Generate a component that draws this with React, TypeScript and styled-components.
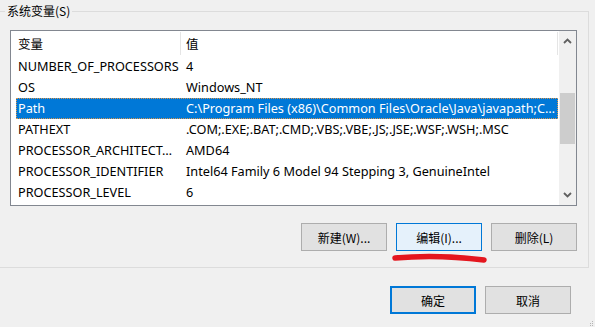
import React from "react";
import styled, { createGlobalStyle } from "styled-components";

const GlobalStyle = createGlobalStyle`
  html, body { margin: 0; padding: 0; background: #f0f0f0; }
  body {
    font-family: "Segoe UI", "Noto Sans", "Noto Sans CJK SC", sans-serif;
    font-size: 12.7px;
    color: #000;
    overflow: hidden;
  }
`;

const Page = styled.div`
  position: relative;
  width: 595px;
  height: 327px;
  display: flex;
  flex-direction: column;
  box-sizing: border-box;
  padding-top: 11px;
`;

const Group = styled.div`
  position: relative;
  width: 589px;
  box-sizing: border-box;
  border: 1px solid #dcdcdc;
  border-left: none;
  padding: 18px 11px 16px 10px;
  display: flex;
  flex-direction: column;
  gap: 17px;
`;

const Legend = styled.span`
  position: absolute;
  left: 5px;
  top: -9px;
  padding: 0 2px;
  background: #f0f0f0;
  line-height: 16px;
  font-size: 12px;
  font-family: "Noto Sans CJK SC", sans-serif;
`;

const ListBox = styled.div`
  height: 176px;
  box-sizing: border-box;
  border: 1px solid #828790;
  background: #fff;
  display: flex;
`;

const ListMain = styled.div`
  flex: 1;
  padding: 0 1px 0 5px;
  display: flex;
  flex-direction: column;
  overflow: hidden;
`;

const Row = styled.div<{ $header?: boolean; $selected?: boolean }>`
  display: grid;
  grid-template-columns: 165px 1fr;
  height: ${(p) => (p.$header ? 25 : 21)}px;
  line-height: ${(p) => (p.$header ? 25 : 21)}px;
  background: ${(p) => (p.$selected ? "#0078d7" : "transparent")};
  color: ${(p) => (p.$selected ? "#fff" : "#000")};
  outline: ${(p) => (p.$selected ? "1px dotted #d9964f" : "none")};
  outline-offset: -1px;
  white-space: nowrap;
`;

const Cell = styled.div<{ $first?: boolean; $header?: boolean }>`
  overflow: hidden;
  text-overflow: ellipsis;
  padding-left: ${(p) => (p.$first ? 2 : 5)}px;
  box-sizing: border-box;
  font-family: ${(p) => (p.$header ? '"Noto Sans CJK SC", sans-serif' : "inherit")};
  font-size: ${(p) => (p.$header ? "12.5px" : "inherit")};
  border-right: ${(p) => (p.$header ? "1px solid #e5e5e5" : "none")};
  margin: ${(p) => (p.$header ? "1px 0 1px" : "0")};
  line-height: ${(p) => (p.$header ? "23px" : "inherit")};
`;

const ScrollBar = styled.div`
  width: 17px;
  background: #f0f0f0;
  display: flex;
  flex-direction: column;
`;

const ArrowBtn = styled.div`
  height: 20px;
  display: flex;
  align-items: center;
  justify-content: center;
`;

const Track = styled.div`
  flex: 1;
  display: flex;
  flex-direction: column;
`;

const Thumb = styled.div`
  width: 15px;
  margin-left: 1px;
  background: #cdcdcd;
`;

const ButtonRow = styled.div`
  display: flex;
  justify-content: flex-end;
  gap: 9px;
`;

const BtnWrap = styled.div`
  position: relative;
`;

const Button = styled.button<{ $variant?: "normal" | "hover" | "default" }>`
  width: 86px;
  height: 28px;
  margin: 0;
  padding: 0;
  box-sizing: border-box;
  font-family: "Noto Sans CJK SC", sans-serif;
  font-size: 12px;
  color: #000;
  background: ${(p) => (p.$variant === "hover" ? "#e5f1fb" : "#e1e1e1")};
  border: ${(p) =>
    p.$variant === "hover"
      ? "1px solid #0078d7"
      : p.$variant === "default"
      ? "2px solid #0078d7"
      : "1px solid #adadad"};
`;

const RedMark = styled.svg`
  position: absolute;
  left: -4px;
  top: 30px;
  overflow: visible;
`;

const DialogButtons = styled.div`
  display: flex;
  justify-content: flex-end;
  gap: 9px;
  margin-top: 18px;
  padding-right: 24px;
`;

const Grip = styled.svg`
  position: absolute;
  right: 1px;
  bottom: 1px;
`;

const rows: [string, string][] = [
  ["NUMBER_OF_PROCESSORS", "4"],
  ["OS", "Windows_NT"],
  ["Path", "C:\\Program Files (x86)\\Common Files\\Oracle\\Java\\javapath;C:\u2026"],
  ["PATHEXT", ".COM;.EXE;.BAT;.CMD;.VBS;.VBE;.JS;.JSE;.WSF;.WSH;.MSC"],
  ["PROCESSOR_ARCHITECT\u2026", "AMD64"],
  ["PROCESSOR_IDENTIFIER", "Intel64 Family 6 Model 94 Stepping 3, GenuineIntel"],
  ["PROCESSOR_LEVEL", "6"],
];

const thumbOffset = 42;
const thumbSize = 51;

export default function App() {
  return (
    <>
      <GlobalStyle />
      <Page>
        <Group>
          <Legend>系统变量(S)</Legend>
          <ListBox>
            <ListMain>
              <Row $header>
                <Cell $first $header>变量</Cell>
                <Cell $header>值</Cell>
              </Row>
              {rows.map(([k, v], i) => (
                <Row key={k} $selected={i === 2}>
                  <Cell $first>{k}</Cell>
                  <Cell>{v}</Cell>
                </Row>
              ))}
            </ListMain>
            <ScrollBar>
              <ArrowBtn>
                <svg width="9" height="6" viewBox="0 0 9 6">
                  <polyline points="1,5 4.5,1.5 8,5" fill="none" stroke="#606060" strokeWidth="1.8" />
                </svg>
              </ArrowBtn>
              <Track>
                <Thumb style={{ marginTop: thumbOffset, height: thumbSize }} />
              </Track>
              <ArrowBtn>
                <svg width="9" height="6" viewBox="0 0 9 6">
                  <polyline points="1,1 4.5,4.5 8,1" fill="none" stroke="#606060" strokeWidth="1.8" />
                </svg>
              </ArrowBtn>
            </ScrollBar>
          </ListBox>
          <ButtonRow>
            <Button>新建(W)...</Button>
            <BtnWrap>
              <Button $variant="hover">编辑(I)...</Button>
              <RedMark width="96" height="10" viewBox="0 0 96 10">
                <path d="M3,5 C30,2.5 60,3 92,7" fill="none" stroke="#e4161e" strokeWidth="5.5" strokeLinecap="round" />
              </RedMark>
            </BtnWrap>
            <Button>删除(L)</Button>
          </ButtonRow>
        </Group>
        <DialogButtons>
          <Button $variant="default">确定</Button>
          <Button>取消</Button>
        </DialogButtons>
        <Grip width="5" height="5" viewBox="0 0 5 5">
          <rect x="3" y="0" width="1" height="1" fill="#b5b5b5" />
          <rect x="1" y="2" width="1" height="1" fill="#b5b5b5" />
          <rect x="3" y="2" width="1" height="1" fill="#b5b5b5" />
          <rect x="3" y="4" width="1" height="1" fill="#b5b5b5" />
          <rect x="1" y="4" width="1" height="1" fill="#b5b5b5" />
        </Grip>
      </Page>
    </>
  );
}
